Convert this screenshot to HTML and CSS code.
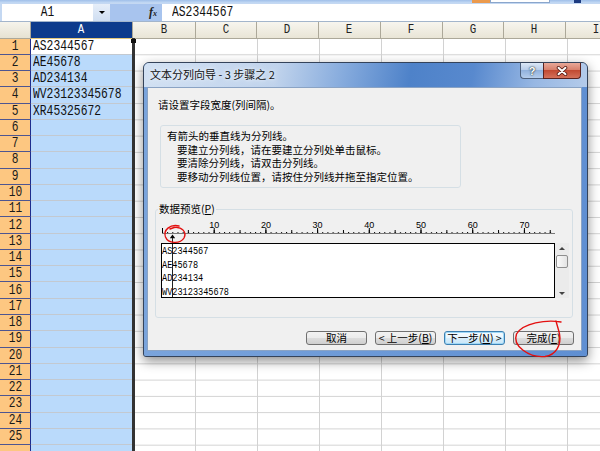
FILE: index.html
```html
<!DOCTYPE html>
<html>
<head>
<meta charset="utf-8">
<link rel="stylesheet" href="styles.css">
</head>
<body>
<div class="app">
  <div class="toolstrip"><span class="ts-orange"></span><span class="ts-box"></span><span class="ts-icon"></span></div>
  <div class="fbar">
    <div class="namebox"><span class="mc">A1</span></div>
    <div class="nbdrop"><span class="tri"></span></div>
    <div class="fxzone"><span class="fx">f<small>x</small></span></div>
    <div class="formula"><span class="mt">AS2344567</span></div>
  </div>
  <div class="sheet">
    <div class="corner"></div>
    <div class="ch sel"><span class="mc">A</span></div>
    <div class="colheads">
      <div class="ch w63"><span class="mc">B</span></div>
      <div class="ch w61"><span class="mc">C</span></div>
      <div class="ch"><span class="mc">D</span></div>
      <div class="ch"><span class="mc">E</span></div>
      <div class="ch"><span class="mc">F</span></div>
      <div class="ch w61"><span class="mc">G</span></div>
      <div class="ch"><span class="mc">H</span></div>
      <div class="ch last"><span class="mc">I</span></div>
    </div>
    <div class="rest"></div>
    <div class="rh"><span class="mc">1</span></div><div class="ac active"><span class="mt">AS2344567</span></div>
    <div class="rh"><span class="mc">2</span></div><div class="ac"><span class="mt">AE45678</span></div>
    <div class="rh"><span class="mc">3</span></div><div class="ac"><span class="mt">AD234134</span></div>
    <div class="rh"><span class="mc">4</span></div><div class="ac"><span class="mt">WV23123345678</span></div>
    <div class="rh"><span class="mc">5</span></div><div class="ac"><span class="mt">XR45325672</span></div>
    <div class="rh"><span class="mc">6</span></div><div class="ac"></div>
    <div class="rh"><span class="mc">7</span></div><div class="ac"></div>
    <div class="rh"><span class="mc">8</span></div><div class="ac"></div>
    <div class="rh"><span class="mc">9</span></div><div class="ac"></div>
    <div class="rh"><span class="mc">10</span></div><div class="ac"></div>
    <div class="rh"><span class="mc">11</span></div><div class="ac"></div>
    <div class="rh"><span class="mc">12</span></div><div class="ac"></div>
    <div class="rh"><span class="mc">13</span></div><div class="ac"></div>
    <div class="rh"><span class="mc">14</span></div><div class="ac"></div>
    <div class="rh"><span class="mc">15</span></div><div class="ac"></div>
    <div class="rh"><span class="mc">16</span></div><div class="ac"></div>
    <div class="rh"><span class="mc">17</span></div><div class="ac"></div>
    <div class="rh"><span class="mc">18</span></div><div class="ac"></div>
    <div class="rh"><span class="mc">19</span></div><div class="ac"></div>
    <div class="rh"><span class="mc">20</span></div><div class="ac"></div>
    <div class="rh"><span class="mc">21</span></div><div class="ac"></div>
    <div class="rh"><span class="mc">22</span></div><div class="ac"></div>
    <div class="rh"><span class="mc">23</span></div><div class="ac"></div>
    <div class="rh"><span class="mc">24</span></div><div class="ac"></div>
    <div class="rh"><span class="mc">25</span></div><div class="ac"></div>
    <div class="rh"></div><div class="ac"></div>
  </div>
  <div class="marquee"></div>

  <div class="dialog">
    <div class="titlebar">
      <span class="title">文本分列向导 - 3 步骤之 2</span>
      <div class="capbtns">
        <div class="cap help">?</div>
        <div class="cap close">
          <svg width="12" height="10" viewBox="0 0 12 10"><path d="M2.5 1.8 L9.5 8.2 M9.5 1.8 L2.5 8.2" stroke="#5a1e16" stroke-width="3.6" stroke-linecap="round" fill="none"/><path d="M2.5 1.8 L9.5 8.2 M9.5 1.8 L2.5 8.2" stroke="#fff" stroke-width="2" stroke-linecap="round" fill="none"/></svg>
        </div>
      </div>
    </div>
    <div class="dframe">
      <div class="client">
        <p class="intro">请设置字段宽度(列间隔)。</p>
        <div class="hintbox">
          <p>有箭头的垂直线为分列线。</p>
          <p class="ind">要建立分列线，请在要建立分列处单击鼠标。</p>
          <p class="ind">要清除分列线，请双击分列线。</p>
          <p class="ind">要移动分列线位置，请按住分列线并拖至指定位置。</p>
        </div>
        <div class="pgroup">
          <span class="legend">数据预览(<u>P</u>)</span>
          <svg class="ruler" width="400" height="24" viewBox="0 0 400 24">
            <defs>
              <pattern id="tk1" x="4" y="0" width="5.17" height="24" patternUnits="userSpaceOnUse"><rect x="0" y="13" width="1" height="1" fill="#000"/></pattern>
              <pattern id="tk5" x="4" y="0" width="25.85" height="24" patternUnits="userSpaceOnUse"><rect x="0" y="11" width="1" height="3" fill="#000"/></pattern>
              <pattern id="tk10" x="4" y="0" width="51.7" height="24" patternUnits="userSpaceOnUse"><rect x="0" y="9" width="1" height="5" fill="#000"/></pattern>
            </defs>
            <rect x="4" y="14" width="393" height="1" fill="#777"/>
            <rect x="4" y="0" width="393" height="24" fill="url(#tk1)"/>
            <rect x="4" y="0" width="393" height="24" fill="url(#tk5)"/>
            <rect x="4" y="0" width="393" height="24" fill="url(#tk10)"/>
            <g font-family="Liberation Sans, sans-serif" font-size="9" text-anchor="middle" fill="#000">
              <text x="56.2" y="9">10</text>
              <text x="107.9" y="9">20</text>
              <text x="159.6" y="9">30</text>
              <text x="211.3" y="9">40</text>
              <text x="263" y="9">50</text>
              <text x="314.7" y="9">60</text>
              <text x="366.4" y="9">70</text>
            </g>
            <path d="M14.5 15.6 L11.8 19.2 L17.2 19.2 Z" fill="#000"/>
            <rect x="14" y="19" width="1" height="5" fill="#222"/>
          </svg>
          <div class="prow">
            <div class="preview">
              <div class="pline"><span>AS2344567</span></div>
              <div class="pline"><span>AE45678</span></div>
              <div class="pline"><span>AD234134</span></div>
              <div class="pline"><span>WV23123345678</span></div>
              <div class="brk"></div>
            </div>
            <div class="vscroll">
              <span class="arr up"></span>
              <span class="thumb"></span>
              <span class="arr down"></span>
            </div>
          </div>
          <div class="hscroll"></div>
        </div>
        <div class="btnrow">
          <div class="btn">取消</div>
          <div class="btn">&lt; 上一步(<u>B</u>)</div>
          <div class="btn def">下一步(<u>N</u>) &gt;</div>
          <div class="btn">完成(<u>F</u>)</div>
        </div>
      </div>
    </div>
  </div>

  <svg class="annot" width="600" height="451" viewBox="0 0 600 451">
    <path d="M179 226 C170 224, 163 230, 165.5 237 C168 243.5, 180 244.5, 184 238 C187 232, 182 226.5, 174 227.5 L170 229" fill="none" stroke="#e31010" stroke-width="1.4" stroke-linecap="round"/>
    <path d="M561 322 C546 319.5, 523 323, 516.5 334 C512 346, 529 358, 545 356.5 C556 355, 561.5 345, 559.5 334 C558.5 329, 557 325, 556 321" fill="none" stroke="#e31010" stroke-width="1.4" stroke-linecap="round"/>
  </svg>
</div>
</body>
</html>
```

FILE: styles.css
```css
* { box-sizing: border-box; }
html, body { margin: 0; padding: 0; }
body {
  width: 600px;
  height: 451px;
  overflow: hidden;
  background: #fff;
  font-family: "Liberation Mono", monospace;
}
.app { position: relative; width: 600px; height: 451px; overflow: hidden; }

/* top toolbar remnant */
.toolstrip { display: flex; height: 3px; background: linear-gradient(#9fbfe9, #c6dbf5); }
.ts-orange { width: 18px; margin-left: 472px; background: #eb9a4d; }
.ts-box { width: 60px; background: #fff; border: 1px solid #8aa6cc; border-top: 0; }
.ts-icon { width: 7px; margin-left: 24px; background: #1d3b80; }

/* formula bar */
.fbar {
  display: flex;
  height: 19px;
  padding-top: 1px;
  background: #c4d8f2;
  border-bottom: 1px solid #a3b5cb;
}
.namebox {
  margin-left: 2px;
  width: 91px;
  background: #fff;
  display: flex;
  align-items: center;
  justify-content: center;
  font-size: 14px;
  line-height: 13px;
  color: #111;
}
.nbdrop {
  width: 17px;
  background: linear-gradient(#e6eef9, #cfdef2);
  display: flex;
  align-items: center;
  justify-content: center;
}
.tri {
  width: 0; height: 0;
  border-left: 3px solid transparent;
  border-right: 3px solid transparent;
  border-top: 3px solid #000;
}
.fxzone {
  width: 52px;
  background: #a8c4ee;
  display: flex;
  align-items: center;
  justify-content: flex-end;
  padding-right: 5px;
}
.fx {
  font-family: "Liberation Serif", serif;
  font-style: italic;
  font-weight: bold;
  font-size: 12px;
  line-height: 13px;
  color: #222;
}
.fx small { font-size: 8px; }
.formula {
  flex: 1;
  background: #fff;
  display: flex;
  align-items: center;
  padding-left: 10px;
  font-size: 14px;
  line-height: 13px;
  color: #111;
}

.mt { display: inline-block; white-space: nowrap; transform: scaleX(.81); transform-origin: 0 50%; }
.mc { display: inline-block; white-space: nowrap; transform: scaleX(.8); }

/* sheet */
.sheet {
  display: grid;
  grid-template-columns: 31px 102px 1fr;
  grid-template-rows: 16.5px repeat(26, 16.28px);
  height: 429px;
  overflow: hidden;
}
.corner {
  background: linear-gradient(#f6f4ec, #e6e2d2);
  border-right: 1px solid #aca899;
  border-bottom: 1px solid #aca899;
}
.ch {
  display: flex;
  align-items: center;
  justify-content: center;
  font-size: 13.5px;
  line-height: 13px;
  color: #222;
  background: linear-gradient(#f7f5ee, #e9e5d6);
  border-right: 1px solid #aca899;
  border-bottom: 1px solid #aca899;
}
.ch.sel { background: #0d3b8c; color: #fff; border-bottom-color: #e3c67a; }
.colheads { display: flex; }
.colheads .ch { flex: none; width: 62px; }
.colheads .ch.w63 { width: 63px; }
.colheads .ch.w61 { width: 61px; }
.colheads .ch.last { flex: 1; }

.rh {
  display: flex;
  align-items: center;
  justify-content: center;
  background: #fdc781;
  border-right: 1px solid #1f2d8c;
  border-bottom: 1px solid #4d5591;
  font-size: 14px;
  line-height: 13px;
  color: #1a1a1a;
}
.ac {
  display: flex;
  align-items: center;
  padding-left: 2px;
  background: #badafb;
  border-bottom: 1px solid #c3c9d0;
  font-size: 14px;
  line-height: 13px;
  color: #111;
}
.ac.active { background: #fff; }
.rest {
  grid-column: 3;
  grid-row: 2 / span 26;
  background-color: #fff;
  background-image:
    linear-gradient(to right, #d2d2d2 1px, transparent 1px),
    linear-gradient(to bottom, transparent 15.28px, #d2d2d2 15.28px);
  background-size: 62px 100%, 100% 16.28px;
  background-position: 0 0, 0 0;
}

.marquee {
  position: absolute;
  left: 132px;
  top: 38px;
  bottom: 0;
  width: 3px;
  background: #333;
}
.marquee::before {
  content: "";
  position: absolute;
  left: -1px;
  top: 1px;
  width: 5px;
  height: 4px;
  background: #111;
}

/* dialog */
.dialog {
  position: absolute;
  left: 143px;
  top: 62px;
  width: 445px;
  height: 295px;
  border: 1px solid #34435a;
  border-radius: 6px 6px 3px 3px;
  background: #6b98d6;
  display: flex;
  flex-direction: column;
  box-shadow: 0 4px 12px rgba(0, 0, 0, .45);
  overflow: hidden;
  font-family: "Noto Sans CJK SC", "Noto Sans", sans-serif;
}
.titlebar {
  height: 24px;
  display: flex;
  align-items: flex-start;
  background: linear-gradient(100deg, #d2e1f3 0%, #c0d3ec 30%, #86abdd 45%, #4e82c9 60%, #5889ce 74%, #97b7e3 88%, #b4cbea 100%);
}
.title {
  margin: 4px 0 0 6px;
  font-size: 11px;
  line-height: 15px;
  color: #111;
  white-space: nowrap;
  text-shadow: 0 0 6px #eef4fb, 0 0 3px #eef4fb;
}
.capbtns { margin-left: auto; margin-right: 6px; display: flex; }
.cap { height: 16px; display: flex; align-items: center; justify-content: center; }
.help {
  width: 23px;
  border: 1px solid #4d607c;
  border-top: 0;
  border-right: 0;
  border-radius: 0 0 0 4px;
  background: linear-gradient(#dbe7f5 0%, #b9cde9 45%, #92b2dd 50%, #b5cdec 100%);
  color: #fff;
  font: bold 11px "Liberation Sans", sans-serif;
  text-shadow: 0 0 2px #233, 0 0 1px #233;
}
.close {
  width: 38px;
  border: 1px solid #5a2320;
  border-top: 0;
  border-radius: 0 0 4px 0;
  background: linear-gradient(#e8a898 0%, #d7806c 45%, #c24a32 50%, #d4715a 100%);
}
.dframe {
  flex: 1;
  display: flex;
  padding: 0 5px 5px 3px;
  background: linear-gradient(to right, #7aa4dc, #5f8fd2);
}
.client {
  flex: 1;
  display: flex;
  flex-direction: column;
  background: #f0f0f0;
  border: 1px solid #8aa3c4;
  font-size: 10.5px;
  color: #000;
}
.intro { margin: 10px 0 0 10px; line-height: 13px; white-space: nowrap; }
.hintbox {
  margin: 14px 0 0 12px;
  width: 301px;
  border: 1px solid #d5dfe5;
  border-radius: 3px;
  padding: 3px 0 4px 6px;
  line-height: 13.5px;
  white-space: nowrap;
}
.hintbox p { margin: 0; }
.hintbox .ind { padding-left: 10px; }

.pgroup {
  position: relative;
  margin: 21px 0 0 7px;
  width: 418px;
  height: 109px;
  border: 1px solid #d5dfe5;
  border-radius: 3px;
  padding: 9px 0 0 2px;
}
.legend {
  position: absolute;
  top: -8px;
  left: 2px;
  padding: 0 1px;
  background: #f0f0f0;
  line-height: 13px;
  white-space: nowrap;
}
.ruler { display: block; }
.prow { display: flex; margin-left: 3px; }
.preview {
  position: relative;
  width: 394px;
  height: 55px;
  border: 1px solid #000;
  background: #fff;
  padding-top: 1px;
  overflow: hidden;
}
.pline {
  height: 13.6px;
  line-height: 13.6px;
  font-family: "Liberation Mono", monospace;
  font-size: 11px;
  color: #000;
  white-space: nowrap;
}
.pline span { display: inline-block; transform: scaleX(.78); transform-origin: 0 50%; }
.brk { position: absolute; left: 10px; top: 0; bottom: 0; width: 1px; background: #222; }
.vscroll {
  width: 14px;
  height: 55px;
  background: #ebebeb;
  display: flex;
  flex-direction: column;
  align-items: center;
  padding: 4px 0 3px;
}
.arr { width: 0; height: 0; border-left: 3px solid transparent; border-right: 3px solid transparent; }
.arr.up { border-bottom: 3px solid #444; }
.arr.down { border-top: 3px solid #444; margin-top: auto; }
.thumb {
  margin-top: 5px;
  width: 12px;
  height: 13px;
  border: 1px solid #8f8f8f;
  border-radius: 2px;
  background: linear-gradient(to right, #fbfbfb, #e4e4e4);
}
.hscroll { margin-left: 3px; width: 394px; height: 13px; }

.btnrow {
  display: flex;
  justify-content: flex-end;
  gap: 8px;
  margin: 13px 7px 0 0;
}
.btn {
  width: 61px;
  height: 14px;
  border: 1px solid #707070;
  border-radius: 3px;
  background: linear-gradient(#f2f2f2, #ebebeb 50%, #dddddd 50%, #cfcfcf);
  font-size: 10.5px;
  line-height: 12px;
  display: flex;
  align-items: center;
  justify-content: center;
  white-space: nowrap;
}
.btn.def {
  border-color: #3c7fb1;
  box-shadow: inset 0 0 0 1px #9fd8f7;
  background: linear-gradient(#f6fbfe, #eaf6fd 50%, #d9eefa 50%, #c8e6f8);
}

.annot { position: absolute; left: 0; top: 0; pointer-events: none; }
```
